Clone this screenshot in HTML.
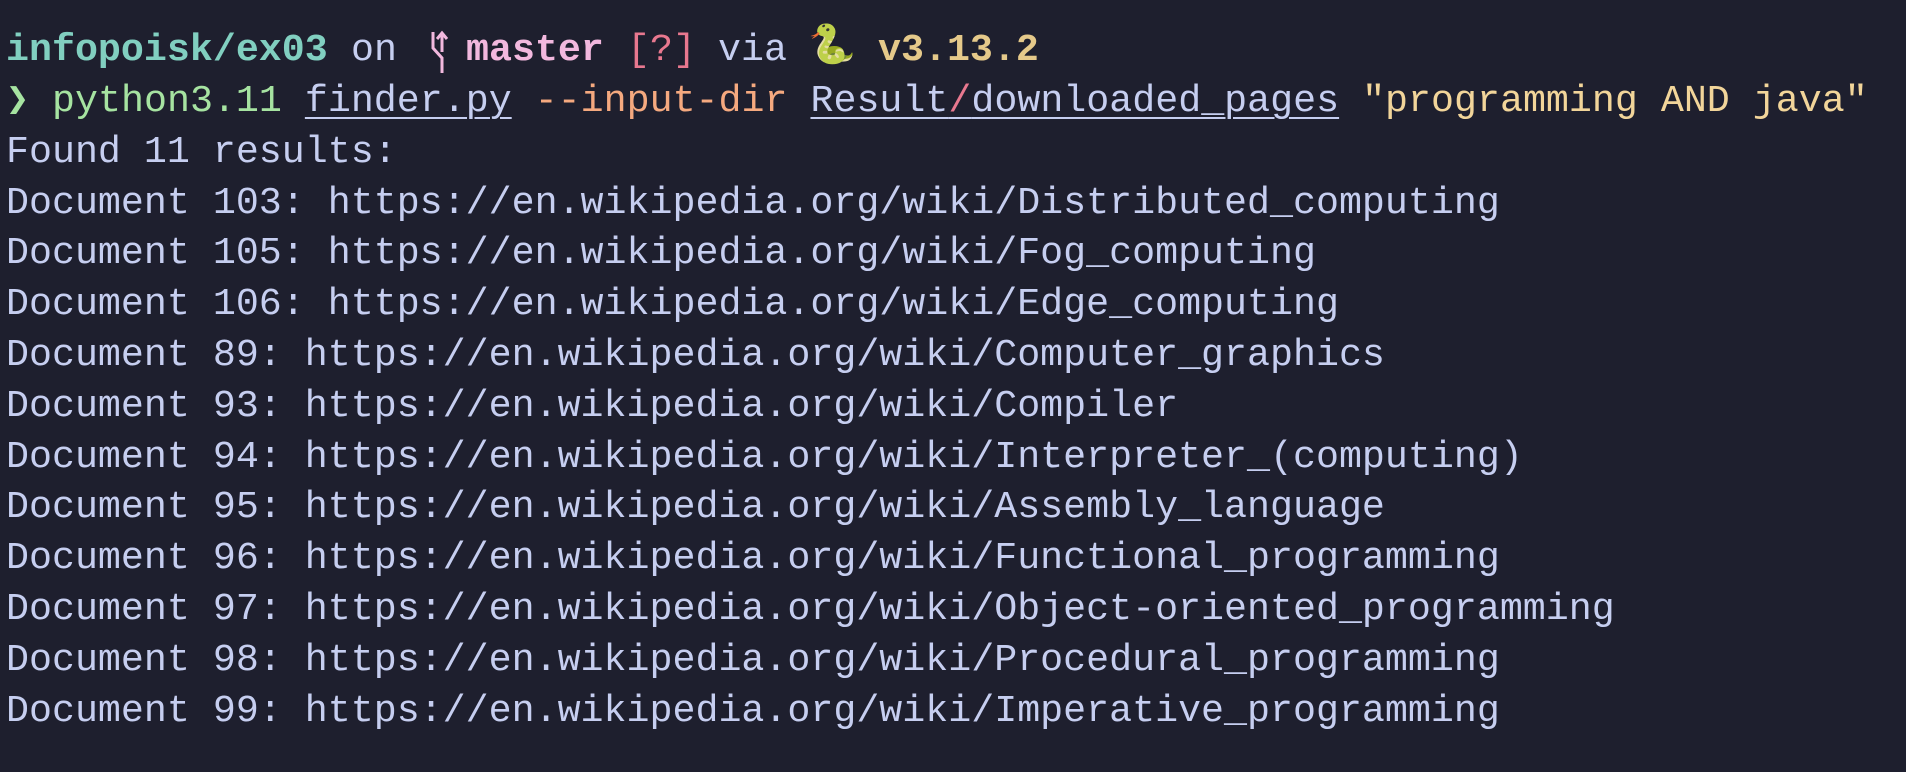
<!DOCTYPE html>
<html><head><meta charset="utf-8"><style>
html,body{margin:0;padding:0;background:#1e1f2e;width:1906px;height:772px;overflow:hidden}
pre,.l1{margin:0;position:absolute;font-family:"Liberation Mono",monospace;font-size:38.3px;line-height:50.8px;color:#c6cef0;white-space:pre}
pre{left:6px;top:76px}
.l1 span{position:absolute;top:25px}
.t{color:#81cfc0;font-weight:bold}.p{color:#f2b8de;font-weight:bold}.r{color:#e8788f}.y{color:#e5c98a;font-weight:bold}
.g{color:#a6e3a1}.o{color:#f5a97f}.s{color:#f2d59a}.u{text-decoration:underline;text-decoration-thickness:2px;text-underline-offset:6px}
.rs{color:#e8788f}
</style></head><body>
<div class="l1">
<span class="t" style="left:6px">infopoisk/ex03</span>
<span style="left:351px">on</span>
<svg style="position:absolute;left:428px;top:30px" width="22" height="44" viewBox="0 0 22 44"><path d="M5 2 V18 L14 28 V43" stroke="#f2b8de" stroke-width="3" fill="none"/><path d="M14 22 V4 M9 9 L14 3 L19 9" stroke="#f2b8de" stroke-width="3" fill="none"/></svg>
<span class="p" style="left:466px">master</span>
<span class="r" style="left:627px">[?]</span>
<span style="left:718px">via</span>
<span style="left:808px;top:22px">🐍</span>
<span class="y" style="left:878px">v3.13.2</span>
</div>
<pre><span class="g">❯</span> <span class="g">python3.11</span> <span class="u">finder.py</span> <span class="o">--input-dir</span> <span class="u">Result<span class="rs">/</span>downloaded_pages</span> <span class="s">"programming AND java"</span>
Found 11 results:
Document 103: https://en.wikipedia.org/wiki/Distributed_computing
Document 105: https://en.wikipedia.org/wiki/Fog_computing
Document 106: https://en.wikipedia.org/wiki/Edge_computing
Document 89: https://en.wikipedia.org/wiki/Computer_graphics
Document 93: https://en.wikipedia.org/wiki/Compiler
Document 94: https://en.wikipedia.org/wiki/Interpreter_(computing)
Document 95: https://en.wikipedia.org/wiki/Assembly_language
Document 96: https://en.wikipedia.org/wiki/Functional_programming
Document 97: https://en.wikipedia.org/wiki/Object-oriented_programming
Document 98: https://en.wikipedia.org/wiki/Procedural_programming
Document 99: https://en.wikipedia.org/wiki/Imperative_programming</pre></body></html>
